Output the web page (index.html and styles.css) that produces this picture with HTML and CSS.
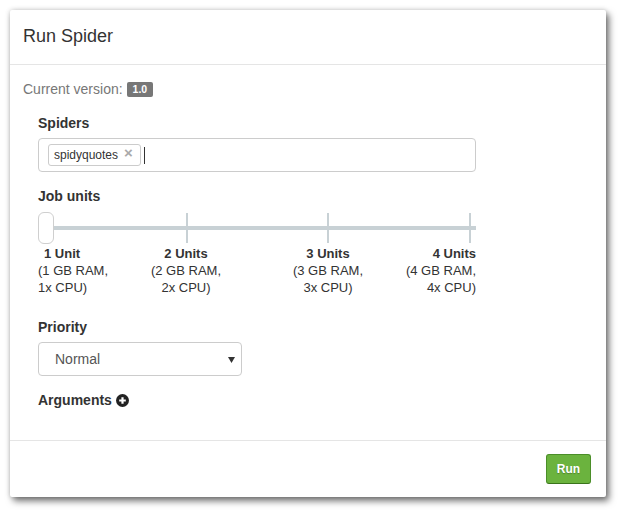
FILE: index.html
```html
<!DOCTYPE html>
<html>
<head>
<meta charset="utf-8">
<link rel="stylesheet" href="styles.css">
</head>
<body>
<div class="page">
  <div class="modal">
    <div class="modal-header">
      <h4 class="modal-title">Run Spider</h4>
    </div>
    <div class="modal-body">
      <div class="version">Current version: <span class="badge">1.0</span></div>
      <div class="form">
        <label class="label">Spiders</label>
        <div class="tag-input">
          <span class="tag">spidyquotes<span class="tag-x">×</span></span>
          <span class="caret"></span>
        </div>

        <label class="label label-jobs">Job units</label>
        <div class="slider">
          <span class="tick"></span>
          <span class="tick"></span>
          <span class="tick"></span>
          <span class="tick"></span>
          <span class="handle"></span>
        </div>
        <div class="units">
          <div class="unit-cell cell-start"><div class="unit unit-first"><b>1 Unit</b><br>(1 GB RAM,<br>1x CPU)</div></div>
          <div class="unit-cell cell-mid"><div class="unit"><b>2 Units</b><br>(2 GB RAM,<br>2x CPU)</div></div>
          <div class="unit-cell cell-mid"><div class="unit"><b>3 Units</b><br>(3 GB RAM,<br>3x CPU)</div></div>
          <div class="unit-cell cell-end"><div class="unit unit-last"><b>4 Units</b><br>(4 GB RAM,<br>4x CPU)</div></div>
        </div>

        <label class="label label-priority">Priority</label>
        <div class="select">
          <span>Normal</span>
          <svg class="arrow" width="7" height="6" viewBox="0 0 7 6"><path d="M0 0H7L3.5 6Z" fill="#333"/></svg>
        </div>

        <div class="label label-args">Arguments
          <svg class="plus" width="13" height="13" viewBox="0 0 13 13"><circle cx="6.5" cy="6.5" r="6.5" fill="#222"/><path d="M3.2 6.5H9.8M6.5 3.2V9.8" stroke="#fff" stroke-width="2.2"/></svg>
        </div>
      </div>
    </div>
    <div class="modal-footer">
      <button class="btn-run">Run</button>
    </div>
  </div>
</div>
</body>
</html>
```
FILE: styles.css
```css
* { box-sizing: border-box; }
html, body { margin: 0; padding: 0; background: #fff; }
body {
  font-family: "Liberation Sans", Arial, Helvetica, sans-serif;
  font-size: 14px;
  color: #333;
}
.page {
  padding: 10px 15px 16px 10px;
}
.modal {
  width: 596px;
  height: 487px;
  background: #fff;
  border-radius: 2px;
  box-shadow: 3px 4px 7px rgba(0,0,0,0.55), 0 0 5px rgba(0,0,0,0.18);
  display: flex;
  flex-direction: column;
}
.modal-header {
  height: 55px;
  padding: 13px 13px 0;
  border-bottom: 1px solid #e5e5e5;
}
.modal-title {
  margin: 0;
  font-size: 18px;
  font-weight: normal;
  line-height: 26px;
  color: #333;
}
.modal-body {
  flex: 1;
  padding: 15px 13px 0;
}
.version {
  color: #777;
  line-height: 18px;
  height: 18px;
  display: flex;
  align-items: center;
  gap: 4px;
}
.badge {
  display: inline-block;
  background: #777;
  color: #fff;
  font-weight: bold;
  font-size: 10.5px;
  line-height: 15px;
  height: 15px;
  padding: 0 6px;
  border-radius: 2px;
}
.form {
  margin-left: 15px;
  width: 438px;
  padding-top: 15px;
}
.label {
  display: block;
  font-weight: bold;
  line-height: 20px;
  margin-bottom: 5px;
}
.tag-input {
  height: 34px;
  border: 1px solid #ccc;
  border-radius: 4px;
  display: flex;
  align-items: center;
  padding-left: 9px;
}
.tag {
  display: inline-flex;
  align-items: center;
  height: 22px;
  border: 1px solid #ccc;
  border-radius: 3px;
  padding: 0 7px 0 5px;
  font-size: 12px;
  color: #333;
}
.tag-x {
  margin-left: 6px;
  color: #aaa;
  font-weight: bold;
  font-size: 15px;
  line-height: 14px;
  position: relative;
  top: -2px;
}
.caret {
  display: inline-block;
  width: 1px;
  height: 17px;
  background: #333;
  margin-left: 3px;
}
.label-jobs {
  margin-top: 14px;
  margin-bottom: 6px;
}
.slider {
  position: relative;
  height: 32px;
  padding: 1px 5px 1px 6px;
  display: flex;
  justify-content: space-between;
}
.slider::before {
  content: "";
  position: absolute;
  left: 6px;
  right: 0;
  top: 14px;
  height: 4px;
  background: #c8d1d5;
}
.tick {
  width: 2px;
  height: 30px;
  background: #c8d1d5;
}
.handle {
  position: absolute;
  left: 0;
  top: 0;
  width: 16px;
  height: 32px;
  background: #fff;
  border: 1px solid #cfcfcf;
  border-radius: 6px;
}
.units {
  display: flex;
  margin-top: 1px;
  font-size: 13px;
  line-height: 17px;
  color: #333;
}
.unit-cell { display: flex; }
.cell-start { width: 77px; justify-content: flex-start; }
.cell-mid { width: 142px; justify-content: center; }
.cell-end { width: 77px; justify-content: flex-end; }
.unit { text-align: center; white-space: nowrap; }
.unit-first { text-align: left; }
.unit-first b { padding-left: 6px; }
.unit-last { text-align: right; }
.label-priority {
  margin-top: 21px;
}
.select {
  width: 204px;
  height: 34px;
  border: 1px solid #ccc;
  border-radius: 4px;
  display: flex;
  align-items: center;
  justify-content: space-between;
  padding: 0 6px 0 16px;
  color: #555;
}
.arrow { margin-top: 1px; }
.label-args {
  margin-top: 14px;
  display: flex;
  align-items: center;
  gap: 4px;
}
.modal-footer {
  height: 57px;
  border-top: 1px solid #e5e5e5;
  display: flex;
  justify-content: flex-end;
  align-items: flex-start;
  padding: 13px 15px 0 0;
}
.btn-run {
  width: 45px;
  height: 30px;
  background: #6bb33e;
  border: 1px solid #4b8e29;
  border-bottom-color: #3a741c;
  border-radius: 3px;
  color: #fff;
  font-family: "Liberation Sans", Arial, sans-serif;
  font-weight: bold;
  font-size: 12px;
  text-shadow: 0 1px 1px rgba(0,0,0,0.25);
  padding: 0;
}
```
